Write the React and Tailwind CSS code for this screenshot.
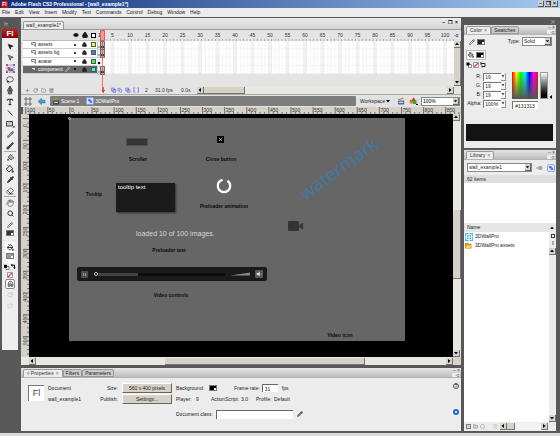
import {
  Brush,
  ChevronsRight,
  Eraser,
  Eye,
  Folder,
  Hand,
  Lasso,
  Lock,
  Magnet,
  MousePointer2,
  PaintBucket,
  Pencil,
  PenTool,
  Pipette,
  Plus,
  RotateCw,
  Search,
  Trash2,
  Type,
} from 'lucide-react';

const menus = ['File', 'Edit', 'View', 'Insert', 'Modify', 'Text', 'Commands', 'Control', 'Debug', 'Window', 'Help'];

const layers = [
  { name: 'assets', color: 'bg-[#fff04a]' },
  { name: 'assets bg', color: 'bg-[#4080f8]' },
  { name: 'avatar', color: 'bg-[#44f044]' },
  { name: 'component', color: 'bg-[#40f0f0]', active: true },
];

const range = (n) => Array.from({ length: n }, (_, i) => i);

function Arrow({ dir }) {
  const paths = {
    up: 'M1 4L3 1.5L5 4Z',
    down: 'M1 2L3 4.5L5 2Z',
    left: 'M4 1L1.5 3L4 5Z',
    right: 'M2 1L4.5 3L2 5Z',
  };
  return (
    <svg viewBox="0 0 6 6" className="size-[6px]">
      <path d={paths[dir]} fill="#000" />
    </svg>
  );
}

function ArrowButton({ dir }) {
  return (
    <button
      aria-label={`Scroll ${dir}`}
      className="flex size-[7px] shrink-0 items-center justify-center border-r border-b border-[#77736c] bg-[#d8d4cc]"
    >
      <Arrow dir={dir} />
    </button>
  );
}

function Tab({ children, active }) {
  return (
    <button
      className={
        active
          ? 'flex h-[8px] items-center gap-[2px] rounded-t-[2px] border border-b-0 border-[#999] bg-[#ececec] px-[3px] text-[#333]'
          : 'flex h-[8px] items-center rounded-t-[2px] border border-[#999] bg-[#cdcdcd] px-[2px] text-[#222]'
      }
    >
      {children}
      {active && <span className="text-[#777]">×</span>}
    </button>
  );
}

function PanelTop({ children }) {
  return (
    <div className="flex h-[10px] items-end border-b border-[#b4b4b4] bg-linear-to-b from-[#e6e6e6] to-[#bdbdbd] pl-[2px]">
      {children}
      <div className="ml-auto flex flex-col items-end pr-[1px] text-[#555]">
        <span className="leading-[5px]">– ×</span>
        <span className="h-[4px] w-[8px] bg-[#ececec] text-right leading-[4px]">-≡</span>
      </div>
    </div>
  );
}

function Dropdown({ label, value, className }) {
  return (
    <div className={`flex h-[9px] items-center border border-[#888] bg-white ${className}`}>
      <select aria-label={label} className="min-w-0 flex-1 appearance-none bg-white pl-[1px] leading-[7px]">
        <option>{value}</option>
      </select>
      <span className="flex h-full w-[6px] items-center justify-center border-r border-b border-[#666] bg-[#d6d2c8]">
        <Arrow dir="down" />
      </span>
    </div>
  );
}

function Swatch({ color }) {
  return (
    <span className={`flex h-[6px] w-[8px] items-end justify-end border border-[#777] ${color}`}>
      <i className="size-[2px] bg-white" />
    </span>
  );
}

function PickColors() {
  return (
    <svg viewBox="0 0 14 6" className="h-[6px] w-[14px]">
      <path d="M3 2.5h3v3H3z" fill="#fff" stroke="#333" strokeWidth=".6" />
      <path d="M1 .8h3v3H1z" fill="#000" />
      <path d="M8 1.2h3.5v3M8 1.2l1.5-1M8 1.2l1.5 1M11.5 4.6l-1-1M11.5 4.6l1-1" fill="none" stroke="#111" />
    </svg>
  );
}

function NoColor() {
  return (
    <svg viewBox="0 0 6 6" className="size-[6px]">
      <path d="M.5 .5h5v5h-5z" fill="#fff" stroke="#777" strokeWidth=".7" />
      <path d="M1 5L5 1" stroke="#e030b0" strokeWidth="1.3" />
    </svg>
  );
}

function Clapper({ color = '#5a68a8' }) {
  return (
    <svg viewBox="0 0 8 8" className="size-[8px]">
      <path d="M1 3.5h6.2V7.5H1z" fill={color} />
      <path d="M.7 2.6L6 .6l.5 1.2-5.3 1.7z" fill="#a8a020" />
      <path d="M2 5.3h4" stroke="#eef" strokeWidth="1" />
    </svg>
  );
}

function SymbolIcon() {
  return (
    <svg viewBox="0 0 8 8" className="size-[8px]">
      <rect x=".5" y=".8" width="7" height="6.5" rx=".6" fill="#e4ebff" stroke="#8aa0e4" />
      <circle cx="3.4" cy="3.2" r="1.3" fill="#4763c8" />
      <path d="M3.8 3.6h2.4v2.4H3.8z" fill="#607be0" />
    </svg>
  );
}

function ShapesIcon() {
  return (
    <svg viewBox="0 0 9 8" className="h-[8px] w-[9px]">
      <circle cx="2.6" cy="4.6" r="2.2" fill="#e87820" />
      <path d="M4.5 .3L7 4H2.5z" fill="#d83030" />
      <path d="M4 3.5h3.6v3.5H4z" fill="#32a050" />
      <path d="M7 7.5h2" stroke="#000" />
    </svg>
  );
}

function Tool({ label, children }) {
  return (
    <button aria-label={label} className="flex h-[11px] w-full shrink-0 items-center justify-center text-[#222]">
      {children}
    </button>
  );
}

function Tools() {
  return (
    <aside className="flex w-[16px] shrink-0 flex-col">
      <div className="flex h-[11px] items-center pl-[1px] text-white">
        <ChevronsRight className="size-[6px]" />
      </div>
      <div className="flex h-[9px] items-center justify-center bg-linear-to-b from-[#c02020] to-[#800808] text-[8px] font-bold text-white">
        Fl
      </div>
      <div className="flex h-[312px] flex-col items-center bg-[#eeeeee] pt-[3px]">
        <Tool label="Selection"><MousePointer2 className="size-[7px] fill-[#111]" strokeWidth={2} /></Tool>
        <Tool label="Subselection"><MousePointer2 className="size-[7px] fill-[#999]" strokeWidth={2} /></Tool>
        <Tool label="Free transform">
          <svg viewBox="0 0 10 10" className="size-[9px]">
            <path d="M1 1h8v8H1z" fill="#d9e2f6" stroke="#5878b8" strokeDasharray="1.5 1" />
            <path d="M2 3l3 1v4L2 7z" fill="#d04040" />
            <path d="M5 5h3v3H5z" fill="#4068c0" />
            <path d="M8 8h2v2H8zM0 0h2v2H0zM8 0h2v2H8zM0 8h2v2H0z" fill="#c04050" />
          </svg>
        </Tool>
        <Tool label="Lasso"><Lasso className="size-[8px]" /></Tool>
        <Tool label="Pen"><PenTool className="size-[8px] rotate-45 fill-[#888]" /></Tool>
        <Tool label="Text"><Type className="size-[8px]" strokeWidth={3} /></Tool>
        <Tool label="Line">
          <svg viewBox="0 0 8 8" className="size-[8px]"><path d="M2 1.5L6.5 6.5" stroke="#222" /></svg>
        </Tool>
        <Tool label="Rectangle">
          <svg viewBox="0 0 10 8" className="h-[8px] w-[10px]">
            <path d="M1.5 1.5h6v4.5h-6z" fill="#c8c8c8" stroke="#444" />
            <path d="M7.5 7.5h2v-2z" fill="#000" />
          </svg>
        </Tool>
        <Tool label="Pencil"><Pencil className="size-[7px] fill-[#aaa]" /></Tool>
        <Tool label="Brush"><Brush className="size-[8px] fill-[#555]" /></Tool>
        <hr className="w-[12px] border-[#aaa]" />
        <Tool label="Ink bottle"><PaintBucket className="size-[7px] -scale-x-100 fill-[#aaa]" /></Tool>
        <Tool label="Paint bucket"><PaintBucket className="size-[8px] fill-[#ddd]" strokeWidth={3} /></Tool>
        <Tool label="Eyedropper"><Pipette className="size-[7px] fill-[#555]" strokeWidth={3} /></Tool>
        <Tool label="Eraser"><Eraser className="size-[8px]" /></Tool>
        <hr className="w-[12px] border-[#aaa]" />
        <Tool label="Hand"><Hand className="size-[8px] text-[#555]" /></Tool>
        <Tool label="Zoom"><Search className="size-[7px]" strokeWidth={3} /></Tool>
        <Tool label="Stroke color"><Pencil className="size-[6px]" /></Tool>
        <Swatch color="bg-[#333]" />
        <div className="mt-[6px] flex w-[10px] flex-col items-center bg-white pb-[4px]">
          <Tool label="Fill color"><PaintBucket className="size-[7px]" strokeWidth={3} /></Tool>
          <Swatch color="bg-[#999]" />
        </div>
        <div className="mt-[1px]"><PickColors /></div>
        <div className="mt-[2px]"><NoColor /></div>
        <button aria-label="Snap to objects" className="mt-[1px] flex size-[10px] shrink-0 items-center justify-center rounded-[2px] border border-[#888] bg-white">
          <Magnet className="size-[7px] -rotate-45 text-[#555]" strokeWidth={3} />
        </button>
        <Tool label="Smooth"><RotateCw className="size-[6px] text-[#aaa]" /></Tool>
        <Tool label="Straighten"><RotateCw className="size-[6px] text-[#bbb]" /></Tool>
      </div>
    </aside>
  );
}

// one frame is 3.5 units wide, every fifth frame carries a number
function Frames() {
  return (
    <svg viewBox="0 0 357 62" preserveAspectRatio="xMinYMin slice" className="h-[62px] min-w-0 flex-1">
      <defs>
        <pattern id="frames" width="17.5" height="8.25" patternUnits="userSpaceOnUse" y="11">
          <path d="M0 0h17.5v8.25H0z" fill="#fff" />
          <path d="M14 0h3.5v8.25H14z" fill="#f1f1f1" />
          <path d="M3.5 0v9M7 0v9M10.5 0v9M14 0v9M17.5 0v9M0 8h17.5" stroke="#e9e9e9" strokeWidth=".5" />
        </pattern>
        <pattern id="frameTicks" width="3.5" height="2" patternUnits="userSpaceOnUse" y="9">
          <path d="M3 0v2" stroke="#999" strokeWidth=".8" />
        </pattern>
      </defs>
      <path d="M0 9h357v2H0z" fill="url(#frameTicks)" />
      <path d="M0 11h357v33H0z" fill="url(#frames)" />
      <text x="1" y="7" fontSize="5" fill="#333">1</text>
      {range(20).map((i) => (
        <text key={i} x={(i + 1) * 17.5 - 2} y="7" fontSize="5" fill="#333" textAnchor="middle">
          {(i + 1) * 5}
        </text>
      ))}
      {[11, 19, 36].map((y) => (
        <g key={y}>
          <path d={`M.5 ${y + 0.5}h3v8h-3z`} fill="#fff" stroke="#999" strokeWidth=".5" />
          <path d={`M3.5 ${y + 0.5}h4v8h-4z`} fill="#bbb" stroke="#444" strokeWidth=".7" />
          <circle cx="2" cy={y + 6} r="1" fill="none" stroke="#555" strokeWidth=".5" />
          <circle cx="5.5" cy={y + 6} r="1.3" />
        </g>
      ))}
      <circle cx="2" cy="33" r="1.3" />
      <path d="M3.5 .5h4v10h-4z" fill="#f49a94" stroke="#d04840" strokeWidth=".8" />
      <path d="M5.5 11v51" stroke="#e06058" strokeWidth=".8" />
    </svg>
  );
}

function Timeline() {
  return (
    <section className="flex flex-col bg-[#e4e4e4]">
      <div className="flex">
        <div className="w-[76px] shrink-0 pl-[2px]">
          <div className="flex h-[11px] items-center justify-end gap-[3px] border-b border-[#bbb] bg-[#e0e0e0] pr-[1px]">
            <Eye className="size-[6px] fill-[#222]" />
            <Lock className="size-[6px] fill-[#222]" strokeWidth={3} />
            <i className="size-[5px] border border-black bg-white" />
          </div>
          <div className="flex h-[33px] flex-col">
            {layers.map((l) => (
              <div
                key={l.name}
                className={`flex flex-1 items-center border-b border-[#ccc] pr-[1px] pl-[8px] ${l.active ? 'bg-[#686868] text-white' : 'bg-white text-[#222]'}`}
              >
                <svg viewBox="0 0 5 5" className="mr-[2px] size-[5px] shrink-0">
                  <path d="M.5 .5h4v4l-2-2h-2z" fill="#ddd" stroke="#444" strokeWidth=".6" />
                </svg>
                <span className="flex-1">{l.name}</span>
                {l.active && <Pencil className="mr-[4px] size-[5px]" />}
                <i className="mr-[6px] size-[2px] rounded-full bg-black" />
                <Lock className="mr-[4px] size-[5px] fill-[#222] text-[#222]" strokeWidth={3} />
                <i className={`size-[5px] border border-[#555] ${l.color}`} />
              </div>
            ))}
          </div>
        </div>
        <Frames />
        <div className="flex h-[56px] w-[7px] shrink-0 flex-col">
          <span className="h-[11px] leading-[11px]">-≡</span>
          <ArrowButton dir="up" />
          <div className="flex-1 border-r border-[#888] bg-[#d6d2c8]" />
          <ArrowButton dir="down" />
        </div>
      </div>
      <div className="-mt-[6px] flex h-[8px] items-center text-[#333]">
        <div className="flex w-[76px] items-center gap-[3px] pl-[4px] text-[#555]">
          <Plus className="size-[5px]" />
          <RotateCw className="size-[5px]" />
          <Folder className="size-[5px]" />
          <Trash2 className="size-[5px]" />
        </div>
        <div className="flex w-[100px] items-center pl-[4px]">
          <svg viewBox="0 0 40 6" className="mr-[6px] h-[6px] w-[38px]">
            <path d="M2.5 0v6M1 3l1.5 2L4 3" stroke="#d83030" fill="none" />
            <g fill="#d4d8ff" stroke="#6870c8" strokeWidth=".7">
              <path d="M11 1h3v3h-3zM12.5 2.5h3v3h-3z" />
              <circle cx="19" cy="2.5" r="1.5" />
              <circle cx="20.5" cy="3.8" r="1.5" />
              <path d="M26 1h3v3h-3zM27.5 2.5h3v3h-3zM36 .7h-1.5v4.6H36M38 .7h1.5v4.6H38" />
            </g>
          </svg>
          <span className="w-[10px]">2</span>
          <span className="w-[26px]">31.0 fps</span>
          <span>0.0s</span>
        </div>
        <div className="mr-[7px] flex flex-1 items-center bg-[#e9e7e2]">
          <ArrowButton dir="left" />
          <span className="h-[7px] w-[41px] border-r border-b border-[#77736c] bg-[#d6d2c8]" />
          <span className="flex-1" />
          <ArrowButton dir="right" />
        </div>
      </div>
    </section>
  );
}

function EditBar() {
  return (
    <div className="flex h-[13px] items-center border-t border-[#aaa] bg-[#e2e2e2] pl-[3px]">
      <svg viewBox="0 0 22 9" className="h-[9px] w-[22px]">
        <path d="M0 2h8M0 7h8M2 0v9M6 0v9" stroke="#555" strokeWidth=".8" />
        <path d="M14 4.5l3.5-3v1.8H21v2.6h-3.5v1.7z" fill="#4aa0d8" stroke="#2a6898" strokeWidth=".6" />
      </svg>
      <div className="ml-[4px] flex h-[10px] flex-1 items-center gap-[1px] rounded-[1px] bg-[#7d7d7d] pl-[2px] text-white">
        <Clapper color="#404850" />
        <button className="mr-[6px]">Scene 1</button>
        <SymbolIcon />
        <button>3DWallPro</button>
      </div>
      <button className="mx-[4px] flex items-center text-[#222]">Workspace <Arrow dir="down" /></button>
      <button aria-label="Edit scene" className="mr-[4px] ml-[2px]"><Clapper /></button>
      <button aria-label="Edit symbols" className="mr-[3px]"><ShapesIcon /></button>
      <Dropdown label="Zoom" value="100%" className="mr-[1px] w-[39px]" />
    </div>
  );
}

// 50 stage pixels take 21.8 units of the ruler
function HRuler() {
  return (
    <svg viewBox="0 0 432 7" preserveAspectRatio="xMinYMin slice" className="h-[7px] w-full bg-[#d5d1c6]">
      {range(100).map((i) => (
        <path key={i} d={`M${2.7 + i * 4.36} ${i % 5 ? 5 : 0}V7`} stroke="#444" strokeWidth=".7" />
      ))}
      {range(20).map((i) => (
        <text key={i} x={3.7 + i * 21.8} y="4.6" fontSize="5" fill="#333">{Math.abs(i * 50 - 100)}</text>
      ))}
    </svg>
  );
}

function VRuler() {
  return (
    <svg viewBox="0 0 6 243" preserveAspectRatio="xMinYMin slice" className="w-[6px] shrink-0 bg-[#d5d1c6]">
      {range(56).map((i) => (
        <path key={i} d={`M${(i + 4) % 5 ? 4 : 0} ${0.2 + i * 4.36}H6`} stroke="#444" strokeWidth=".7" />
      ))}
      {range(11).map((i) => (
        <text key={i} transform={`translate(4.4 ${13 + i * 21.8}) rotate(-90)`} fontSize="5" fill="#333">{i * 50}</text>
      ))}
    </svg>
  );
}

function Caption({ children, className }) {
  return <p className={`absolute -translate-x-1/2 font-bold whitespace-nowrap text-[#0c0c0c] ${className}`}>{children}</p>;
}

function Stage() {
  return (
    <div className="relative mt-[4px] ml-[40px] h-[223px] w-[336px] bg-[#666]">
      <i className="absolute -top-[1px] -left-[1px] size-[3px] rounded-full border border-[#ccc]" />
      <div className="absolute top-[20px] left-[57px] h-[8px] w-[22px] border border-[#505050] bg-[#353535]" />
      <Caption className="top-[38px] left-[69px]">Scroller</Caption>
      <button aria-label="Close" className="absolute top-[18px] left-[148px] flex size-[7px] items-center justify-center bg-black">
        <svg viewBox="0 0 7 7" className="size-[7px]">
          <path d="M2 2l3 3M5 2L2 5" fill="none" stroke="#ddd" strokeWidth=".8" />
        </svg>
      </button>
      <Caption className="top-[38px] left-[152px]">Close button</Caption>
      <Caption className="top-[73px] left-[25px]">Tooltip</Caption>
      <div className="absolute top-[65px] left-[47px] h-[29px] w-[59px] bg-[#1b1b1b] pl-[2px] text-[6px] text-white shadow-[1px_1px_2px_#333]">
        <p className="leading-[9px]">tooltip text</p>
      </div>
      <svg viewBox="0 0 16 16" className="absolute top-[60px] left-[147px] size-[16px]">
        <circle cx="8" cy="8" r="6.2" fill="none" stroke="#fff" strokeWidth="2.3" strokeDasharray="34 5" strokeDashoffset="7" />
      </svg>
      <Caption className="top-[85px] left-[155px]">Preloader animation</Caption>
      <p className="absolute top-[111px] left-[67px] text-[7px] leading-[10px] whitespace-nowrap text-[#d6d6d6]">loaded 10 of 100 images.</p>
      <Caption className="top-[129px] left-[100px]">Preloader text</Caption>
      <p className="absolute top-[38px] left-[224px] -rotate-36 font-['Open_Sans'] text-[18px] leading-[24px] text-[#3f79a3]">watermark</p>
      <svg viewBox="0 0 16 10" className="absolute top-[103px] left-[219px] h-[10px] w-[16px]">
        <rect y="0" width="11" height="10" rx="1.2" fill="#333" />
        <path d="M11 4.5L13.5 2.2 15.2 1.8v6.8l-1.7-.5L11 6z" fill="#383838" />
      </svg>
      <div className="absolute top-[149px] left-[8px] flex h-[14px] w-[190px] items-center rounded-[2px] bg-[#1a1a1a] px-[4px]">
        <button aria-label="Pause" className="flex size-[7px] items-center justify-center gap-[1px] rounded-[1px] bg-[#4c4c4c]">
          <i className="h-[3px] w-[1px] bg-[#999]" />
          <i className="h-[3px] w-[1px] bg-[#999]" />
        </button>
        <div className="ml-[6px] flex h-[3px] flex-1 items-center bg-[#0c0c0c]">
          <i className="size-[4px] rounded-full border border-[#ccc]" />
          <i className="h-[3px] w-[40px] bg-[#424242]" />
        </div>
        <svg viewBox="0 0 20 4" className="mx-[5px] h-[4px] w-[20px]"><path d="M0 3.5L20 .5v3z" fill="#888" /></svg>
        <button aria-label="Mute" className="flex size-[8px] items-center justify-center rounded-[1px] bg-[#585858]">
          <svg viewBox="0 0 6 6" className="size-[6px]"><path d="M.8 2.2H2L3.5 1v4L2 3.8H.8zM5 2v2" fill="#eee" stroke="#ddd" strokeWidth=".4" /></svg>
        </button>
      </div>
      <Caption className="top-[174px] left-[102px]">Video controls</Caption>
      <Caption className="top-[214px] left-[271px]">Video icon</Caption>
    </div>
  );
}

function Properties() {
  return (
    <section className="mt-[3px] flex h-[63px] flex-col bg-[#ececec]">
      <PanelTop>
        <Tab active>◊ Properties</Tab>
        <Tab>Filters</Tab>
        <Tab>Parameters</Tab>
      </PanelTop>
      <div className="flex flex-1 items-start pt-[5px] pl-[7px] text-[#222]">
        <div className="mt-[2px] flex size-[16px] items-center justify-center border-t border-l border-[#777] bg-white text-[9px] text-[#444]">Fl</div>
        <div className="ml-[4px] flex w-[48px] flex-col leading-[11px]">
          <span>Document</span>
          <span>wall_example1</span>
        </div>
        <div className="flex w-[76px] flex-col gap-[1px]">
          <div className="flex items-center justify-end gap-[4px]">
            <span>Size:</span>
            <button className="h-[10px] w-[50px] border border-t-white border-r-[#666] border-b-[#666] border-l-white bg-[#d6d2c8]">560 x 400 pixels</button>
          </div>
          <div className="flex items-center justify-end gap-[4px]">
            <span>Publish:</span>
            <button className="h-[10px] w-[50px] border border-t-white border-r-[#666] border-b-[#666] border-l-white bg-[#d6d2c8]">Settings...</button>
          </div>
        </div>
        <div className="ml-[4px] flex flex-col gap-[1px]">
          <div className="flex h-[10px] items-center">
            <span className="w-[33px]">Background:</span>
            <Swatch color="bg-black" />
            <label htmlFor="rate" className="mr-[2px] ml-[17px]">Frame rate:</label>
            <input id="rate" defaultValue="31" className="h-[8px] w-[16px] border-t border-l border-[#666] bg-white pl-[2px]" />
            <span className="ml-[4px]">fps</span>
          </div>
          <div className="flex h-[10px] items-center">
            <span className="w-[20px]">Player:</span>
            <span className="w-[15px]">9</span>
            <span className="w-[30px]">ActionScript:</span>
            <span className="w-[15px]">3.0</span>
            <span className="w-[18px]">Profile:</span>
            <span>Default</span>
          </div>
          <div className="mt-[4px] flex h-[10px] items-center">
            <label htmlFor="doc-class" className="w-[40px]">Document class:</label>
            <input id="doc-class" className="h-[9px] w-[77px] border-t border-l border-[#666] bg-white" />
            <Pencil className="ml-[4px] size-[6px] fill-[#888]" />
          </div>
        </div>
        <div className="mr-[2px] ml-auto flex flex-col gap-[20px]">
          <button aria-label="Help" className="flex size-[6px] items-center justify-center rounded-full border border-[#555]">?</button>
          <button aria-label="Accessibility" className="flex size-[6px] items-center justify-center rounded-full bg-[#2468c8]">
            <i className="size-[2px] rounded-full bg-white" />
          </button>
        </div>
      </div>
    </section>
  );
}

function Editor() {
  return (
    <main className="flex min-w-0 flex-1 flex-col">
      <div className="flex h-[12px] items-end border-b border-[#999] bg-linear-to-b from-[#ececec] to-[#d2d2d2] pl-[2px]">
        <button className="h-[8px] rounded-t-[2px] border border-b-0 border-[#999] bg-[#eee] px-[2px] text-[#222]">wall_example1*</button>
        <div className="ml-auto flex gap-[3px] pr-[3px] pb-[3px] font-bold">
          <span>–</span><span>❐</span><span>×</span>
        </div>
      </div>
      <Timeline />
      <EditBar />
      <div className="overflow-hidden pl-[2px]"><HRuler /></div>
      <div className="flex bg-[#d5d1c6] pl-[2px]">
        <VRuler />
        <div className="h-[243px] min-w-0 flex-1 overflow-hidden bg-black"><Stage /></div>
        <div className="flex w-[8px] flex-col bg-[#e9e7e2]">
          <ArrowButton dir="up" />
          <div className="mt-[89px] h-[69px] border-r border-b border-[#77736c] bg-[#d6d2c8]" />
          <div className="flex-1" />
          <ArrowButton dir="down" />
        </div>
      </div>
      <div className="flex h-[8px] items-center bg-[#e9e7e2] pl-[8px]">
        <ArrowButton dir="left" />
        <div className="ml-[129px] h-[7px] w-[200px] border-r border-b border-[#77736c] bg-[#d6d2c8]" />
        <div className="flex-1" />
        <ArrowButton dir="right" />
        <span className="w-[8px] self-stretch bg-[#d6d2c8]" />
      </div>
      <Properties />
    </main>
  );
}

function ColorField({ label, value }) {
  return (
    <div className="flex h-[9px] items-center justify-end">
      <label htmlFor={label} className="mr-[2px]">{label}:</label>
      <input id={label} defaultValue={value} className="h-[8px] w-[18px] border-t border-l border-[#777] bg-white pl-[1px]" />
      <button aria-label={`${label} slider`} className="flex h-[8px] w-[5px] items-center border-r border-b border-[#999] bg-[#f4f4f4]"><Arrow dir="down" /></button>
    </div>
  );
}

function ColorPanel() {
  return (
    <section className="flex h-[123px] flex-col bg-[#ececec]">
      <PanelTop>
        <Tab active>Color</Tab>
        <Tab>Swatches</Tab>
      </PanelTop>
      <div className="flex flex-col px-[2px] pt-[2px] text-[#222]">
        <div className="flex h-[9px] items-center">
          <Pencil className="mr-[2px] ml-[3px] size-[6px]" />
          <Swatch color="bg-[#222]" />
          <span className="mr-[2px] ml-auto">Type:</span>
          <Dropdown label="Type" value="Solid" className="mr-[2px] w-[30px]" />
        </div>
        <div className="mt-[4px] flex h-[10px] w-[20px] items-center border border-[#bbb] bg-white">
          <PaintBucket className="mr-[2px] ml-[1px] size-[6px]" strokeWidth={3} />
          <Swatch color="bg-black" />
        </div>
        <div className="mt-[2px] flex items-center gap-[1px]">
          <svg viewBox="0 0 6 6" className="size-[6px]"><path d="M2.5 2.5h3v3h-3z" fill="#fff" stroke="#333" strokeWidth=".5" /><path d="M.5 .5h3v3h-3z" /></svg>
          <NoColor />
          <svg viewBox="0 0 6 6" className="size-[6px]"><path d="M1 1.5h4v3H2M1 0v3M2 3.5v2" fill="none" stroke="#222" /></svg>
        </div>
        <div className="mt-[4px] flex">
          <div className="w-[42px]">
            <ColorField label="R" value="19" />
            <ColorField label="G" value="19" />
            <ColorField label="B" value="19" />
            <ColorField label="Alpha" value="100%" />
          </div>
          <div className="ml-[6px] w-[27px]">
            <div className="h-[27px] bg-[linear-gradient(to_top,#555,transparent),linear-gradient(to_right,red,yellow,lime,cyan,blue,magenta,red)]" />
            <input aria-label="Hex color" defaultValue="#131313" className="mt-[2px] h-[8px] w-full border-t border-l border-[#777] bg-white pl-[2px]" />
          </div>
          <div className="ml-[2px] h-[27px] w-[8px] border border-[#999] bg-linear-to-b from-white to-black" />
          <span className="mt-[22px]"><Arrow dir="left" /></span>
        </div>
        <div className="mt-[14px] mr-[1px] h-[17px] bg-[#131313]" />
      </div>
    </section>
  );
}

function LibraryPanel() {
  return (
    <section className="mt-[2px] flex flex-1 flex-col bg-[#ececec] text-[#222]">
      <PanelTop>
        <Tab active>Library</Tab>
      </PanelTop>
      <div className="flex h-[15px] items-center pl-[3px]">
        <Dropdown label="Document" value="wall_example1" className="w-[65px]" />
        <button aria-label="Pin library" className="ml-[4px]">
          <svg viewBox="0 0 7 6" className="h-[6px] w-[7px]"><path d="M0 3h3M3 1v4M3.5 1.8h2.5v2.4H3.5z" fill="#bbb" stroke="#888" strokeWidth=".7" /></svg>
        </button>
        <button aria-label="New library" className="ml-[4px]"><SymbolIcon /></button>
      </div>
      <div className="h-[8px] bg-[#dedede] pl-[3px] leading-[8px]">62 items</div>
      <div className="h-[40px] bg-white" />
      <table className="w-full text-left">
        <thead>
          <tr className="h-[9px] bg-[#e6e6e6]">
            <th className="p-0 pl-[3px] font-normal">Name</th>
            <th className="w-[7px] p-0 font-normal"><Arrow dir="up" /></th>
          </tr>
        </thead>
      </table>
      <div className="flex flex-1 bg-white">
        <table className="w-full self-start">
          <tbody>
            <tr className="h-[9px]">
              <td className="w-[11px] p-0 pl-[1px]">
                <svg viewBox="0 0 8 8" className="size-[8px]"><path d="M0 0h8v8H0z" fill="#58b4e8" /><path d="M1.5 1.5h5v5h-5zM4 0v8M0 4h8" fill="none" stroke="#dff3ff" /></svg>
              </td>
              <td className="p-0">3DWallPro</td>
            </tr>
            <tr className="h-[8px]">
              <td className="p-0 pl-[1px]">
                <svg viewBox="0 0 8 8" className="size-[7px]"><path d="M.5 1.5h3l1 1H7v4.5H.5z" fill="#e89818" stroke="#7a4c08" strokeWidth=".5" /><path d="M2 4h5.6L6 7H.6z" fill="#ffd850" /></svg>
              </td>
              <td className="p-0">3DWallPro assets</td>
            </tr>
          </tbody>
        </table>
        <div className="flex w-[7px] shrink-0 flex-col items-center gap-[3px] bg-[#ececec] pt-[2px]">
          <i className="size-[4px] border border-[#333] bg-white" />
          <i className="h-[4px] w-[2px] border border-[#aaa]" />
          <ArrowButton dir="up" />
          <div className="flex-1" />
          <ArrowButton dir="down" />
        </div>
      </div>
      <div className="flex h-[9px] items-center gap-[2px] pl-[2px] text-[#777]">
        <Plus className="size-[5px] border border-[#777]" />
        <Folder className="size-[5px] fill-[#ccc]" />
        <i className="size-[5px] rounded-full border border-[#bbb]" />
        <Trash2 className="ml-[6px] size-[5px] text-[#bbb]" />
        <div className="mr-[8px] flex flex-1 bg-[#f4f3f0]">
          <ArrowButton dir="left" />
          <span className="w-[8px] border-r border-b border-[#777] bg-[#d6d2c8]" />
          <span className="flex-1" />
          <ArrowButton dir="right" />
        </div>
      </div>
    </section>
  );
}

export default function App() {
  return (
    <div className="flex min-h-screen flex-col bg-[#585858] font-['Liberation_Sans',sans-serif] text-[5px] leading-[7px]">
      <header className="flex h-[8px] items-center gap-[3px] bg-linear-to-r from-[#12307c] to-[#a6caf0] pl-[1px] text-white">
        <span className="flex size-[7px] items-center justify-center bg-[#b81818] font-bold">Fl</span>
        <h1 className="flex-1 font-bold">Adobe Flash CS3 Professional - [wall_example1*]</h1>
        {['–', '❐', '×'].map((c) => (
          <button key={c} aria-label={c} className="-ml-[2px] flex h-[6px] w-[6px] items-center justify-center border-r border-b border-[#555] bg-[#d6d2c8] leading-[5px] font-bold text-black last:mr-[2px]">{c}</button>
        ))}
      </header>
      <nav className="flex h-[9px] items-center gap-[5px] bg-[#ececec] pl-[2px] text-[#222]">
        {menus.map((m) => <button key={m}>{m}</button>)}
      </nav>
      <div className="flex flex-1 pt-[1px] pl-[2px]">
        <Tools />
        <div className="flex min-w-0 flex-1 pl-[3px]"><Editor /></div>
        <aside className="mr-[1px] flex w-[98px] shrink-0 flex-col pr-[3px] pl-[3px]">
          <div className="flex h-[7px] items-center justify-end text-white"><ChevronsRight className="size-[6px]" /></div>
          <ColorPanel />
          <LibraryPanel />
        </aside>
      </div>
      <footer className="mt-[2px] h-[3px] bg-[#dddbd5]" />
    </div>
  );
}
